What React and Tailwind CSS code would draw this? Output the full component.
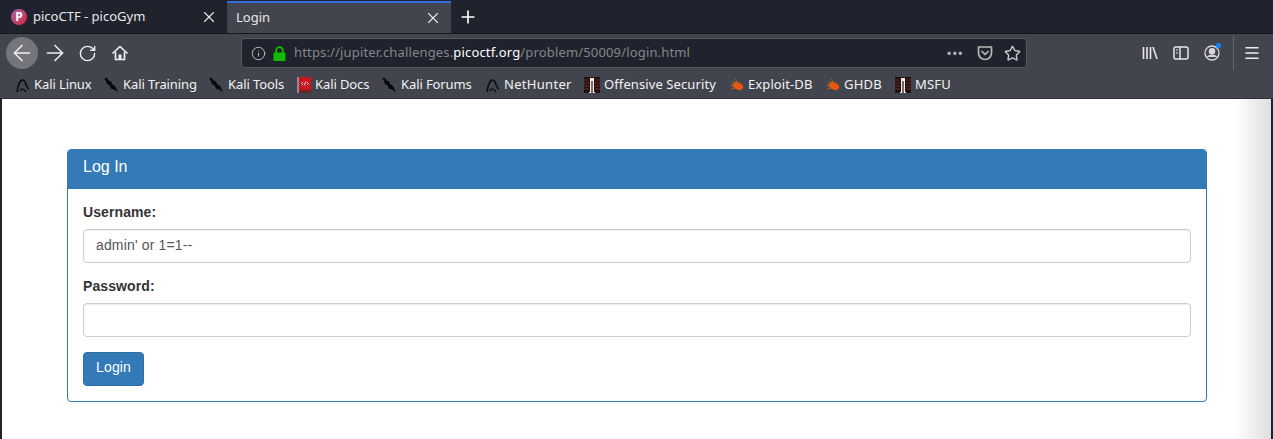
import React from 'react';
import { X, Plus, ArrowLeft, ArrowRight, RotateCw, Info, Star, Menu } from 'lucide-react';

const KaliDragon = () => (
    <svg width="16" height="16" viewBox="0 0 16 16" className="shrink-0">
        <path d="M2 15 C3 9 4 3 8 3 C11 3 10 10 14 12" fill="none" stroke="#0c0d11" strokeWidth="1.6" />
        <path d="M5 14 C6 11 8 11 11 15" fill="none" stroke="#0c0d11" strokeWidth="1.4" />
    </svg>
);

const KaliSword = () => (
    <svg width="16" height="16" viewBox="0 0 16 16" className="shrink-0">
        <path d="M1 1 L4 1 L6 4 L8 4 L9 7 L12 9 L15 15 L10 12 L8 12 L7 9 L4 7 L3 4 Z" fill="#08090b" />
    </svg>
);

const KaliBook = () => (
    <svg width="14" height="16" viewBox="0 0 14 16" className="shrink-0">
        <rect x="0" y="0" width="14" height="16" fill="#8a8d93" />
        <rect x="2" y="0" width="12" height="13" fill="#c8171e" />
        <rect x="2" y="13" width="12" height="3" fill="#6d2428" />
        <path d="M6 5 L4.5 6.5 L6 8 M10 5 L11.5 6.5 L10 8 M8.8 4.5 L7.2 8.5" fill="none" stroke="#fff" strokeWidth="0.8" />
    </svg>
);

const OffSec = () => (
    <svg width="16" height="16" viewBox="0 0 16 16" className="shrink-0">
        <rect width="16" height="16" fill="#24100f" />
        <path d="M0 3 H5 M0 6 H5 M0 9 H5 M0 12 H5 M11 3 H16 M11 6 H16 M11 9 H16 M11 12 H16" stroke="#6b2a26" strokeWidth="1" />
        <path d="M6 1 H10 V15 H11 V16 H8.6 V4 H7.4 V16 H5 V15 H6 Z" fill="#f2eeee" />
    </svg>
);

const Bug = () => (
    <svg width="16" height="16" viewBox="0 0 16 16" className="shrink-0">
        <ellipse cx="9" cy="9" rx="5.5" ry="3.6" transform="rotate(25 9 9)" fill="#e8590f" />
        <path d="M1 8 L5 9 M3 4 L7 7 M2 12 L6 11 M6 2 L9 6" stroke="#a8622f" strokeWidth="1" />
    </svg>
);

const Pocket = () => (
    <svg width="16" height="16" viewBox="0 0 16 16" fill="none" stroke="#b6b8bc" strokeWidth="1.7">
        <path d="M1.5 2 H14.5 V8 A6.5 6.5 0 0 1 1.5 8 Z" strokeLinejoin="round" />
        <path d="M5 6.5 L8 9.5 L11 6.5" strokeLinecap="round" strokeLinejoin="round" />
    </svg>
);

const GreenLock = () => (
    <svg width="13" height="15" viewBox="0 0 13 15" className="ml-[7px] shrink-0">
        <path d="M3.2 7 V4.5 A3.3 3.3 0 0 1 9.8 4.5 V7" fill="none" stroke="#12bc00" strokeWidth="1.8" />
        <rect x="0.5" y="6.5" width="12" height="8.5" rx="0.8" fill="#12bc00" />
    </svg>
);

const HomeIcon = () => (
    <svg width="16" height="16" viewBox="0 0 16 16" className="ml-[15px] shrink-0" fill="none" stroke="#eeeeee" strokeWidth="1.7" strokeLinejoin="round">
        <path d="M1 8 L8 1.5 L15 8" strokeLinecap="round" />
        <path d="M3.5 7 V14.5 H12.5 V7" />
        <rect x="6.5" y="9.5" width="3" height="5" fill="#eeeeee" stroke="none" />
    </svg>
);

const Library = () => (
    <svg width="16" height="16" viewBox="0 0 16 16" fill="none" stroke="#e6e6e8" strokeWidth="1.6">
        <path d="M1.5 2 V14 M5 2 V14 M8.5 2 V14 M11 2 L15 14" />
    </svg>
);

const Sidebar = () => (
    <svg width="16" height="16" viewBox="0 0 16 16" fill="none" stroke="#e6e6e8" strokeWidth="1.5">
        <rect x="1" y="2" width="14" height="12" rx="2" />
        <path d="M7 2 V14" />
        <path d="M3 5 H5 M3 8 H5" strokeWidth="1.2" />
    </svg>
);

const Account = () => (
    <div className="relative w-4 h-4">
        <svg width="16" height="16" viewBox="0 0 16 16" fill="none" stroke="#d8d8da" strokeWidth="1.3">
            <circle cx="8" cy="8" r="7" />
            <circle cx="8" cy="6.2" r="2.6" fill="#d8d8da" />
            <path d="M3.5 12 C5 9.6 11 9.6 12.5 12" fill="#d8d8da" />
        </svg>
        <span className="absolute -top-[2px] -right-[1px] w-[5px] h-[5px] rounded-full bg-[#0a84ff]"></span>
    </div>
);

const bookmarks = [
    { icon: <KaliDragon />, label: 'Kali Linux', box: 'w-[77px] gap-[3px]', text: 'tracking-[-0.1px]' },
    { icon: <KaliSword />, label: 'Kali Training', box: 'w-[94px] gap-[4px]', text: 'tracking-[-0.1px]' },
    { icon: <KaliSword />, label: 'Kali Tools', box: 'w-[78px] gap-[4px]', text: 'tracking-[-0.1px]' },
    { icon: <KaliBook />, label: 'Kali Docs', box: 'w-[73px] gap-[4px]', text: 'tracking-[-0.1px]' },
    { icon: <KaliSword />, label: 'Kali Forums', box: 'w-[93px] gap-[4px]', text: 'tracking-[-0.1px]' },
    { icon: <KaliDragon />, label: 'NetHunter', box: 'w-[88px] gap-[3px]', text: 'tracking-[0.3px]' },
    { icon: <OffSec />, label: 'Offensive Security', box: 'w-[134px] gap-[4px]', text: 'tracking-[0.1px]' },
    { icon: <Bug />, label: 'Exploit-DB', box: 'w-[85px] gap-[3px]', text: 'tracking-[0.1px]' },
    { icon: <Bug />, label: 'GHDB', box: 'w-[59px] gap-[3px]', text: 'tracking-[0.2px]' },
    { icon: <OffSec />, label: 'MSFU', box: 'w-[55px] gap-[4px]', text: 'tracking-[0.2px]' },
];

const Field = ({ label, value, className }) => (
    <div className={className}>
        <label className="block -mt-[2px] mb-[7px] text-[14px] leading-[20px] font-bold text-[#333] tracking-[0.1px]">{label}</label>
        <div className="h-[34px] px-3 pb-[2px] flex items-center bg-white border border-[#ccc] rounded-[4px] text-[14px] text-[#555] tracking-[0.15px] shadow-[inset_0_1px_1px_rgba(0,0,0,0.075)]">
            {value}
        </div>
    </div>
);

export default function App() {
    return (
        <div className="w-[1273px] h-[439px] overflow-hidden flex flex-col bg-[#20232d] font-['Noto_Sans',sans-serif]">
            {/* tabs */}
            <div className="h-[33px] flex items-stretch text-[13px] text-[#e8e8ea]">
                <div className="w-[227px] flex items-center pl-[11px] pr-[9px]">
                    <span className="w-[16px] h-[16px] rounded-full bg-gradient-to-br from-[#9d5aa8] to-[#d8123c] text-white text-[12px] font-bold flex items-center justify-center">P</span>
                    <span className="ml-[6px] flex-1">picoCTF - picoGym</span>
                    <X size={18} strokeWidth={1.5} />
                </div>
                <div className="w-[224px] flex items-center pl-[9px] pr-[9px] bg-[#42454d] border-t-2 border-[#2f6fe0] mt-px">
                    <span className="flex-1">Login</span>
                    <X size={18} strokeWidth={1.5} />
                </div>
                <div className="w-[34px] flex items-center justify-center">
                    <Plus size={20} strokeWidth={2} className="text-white" />
                </div>
            </div>

            {/* nav bar */}
            <div className="h-[39px] flex items-center bg-[#42454d] border-t border-[#15171d] pl-[6px] pr-[11px]">
                <div className="w-[32px] h-[32px] rounded-full bg-[#74767b] flex items-center justify-center">
                    <ArrowLeft size={26} strokeWidth={1.4} className="text-[#f2f2f2]" />
                </div>
                <ArrowRight size={26} strokeWidth={1.4} className="ml-[4px] text-[#eeeeee]" />
                <RotateCw size={19} strokeWidth={1.8} className="ml-[10px] text-[#eeeeee]" />
                <HomeIcon />
                <div className="ml-[113px] w-[786px] h-[30px] flex items-center bg-[#20232d] border border-[#55585f] rounded-[4px] pl-[9px] pr-[5px] text-[13px]">
                    <Info size={15} strokeWidth={1.5} className="text-[#c0c1c4]" />
                    <GreenLock />
                    <span className="ml-[8px] flex-1 text-[#85868b] tracking-[0.16px]">
                        https://jupiter.challenges.<span className="text-white">picoctf.org</span>/problem/50009/login.html
                    </span>
                    <span className="text-[#b6b8bc] font-bold text-[11px] tracking-[1.5px]">•••</span>
                    <span className="ml-[13px] flex"><Pocket /></span>
                    <Star size={17} strokeWidth={2} className="ml-[11px] text-[#c6c7ca]" />
                </div>
                <div className="ml-[115px] flex items-center gap-[15px]">
                    <Library />
                    <Sidebar />
                    <Account />
                </div>
                <div className="ml-[13px] w-px h-[34px] bg-[#63666c]"></div>
                <Menu size={18} strokeWidth={2} className="ml-[9px] text-[#eeeeee]" />
            </div>

            {/* bookmarks */}
            <div className="h-[27px] flex items-center gap-[11px] bg-[#42454d] border-b border-[#2e3037] pl-[15px] text-[13px] text-[#f2f2f4]">
                {bookmarks.map((b) => (
                    <div key={b.label} className={`flex items-center shrink-0 ${b.box}`}>
                        {b.icon}
                        <span className={`whitespace-nowrap ${b.text}`}>{b.label}</span>
                    </div>
                ))}
            </div>

            {/* page */}
            <div className="relative flex-1 mx-[2px] bg-white pt-[50px] pl-[65px] pr-[64px] font-['Liberation_Sans',sans-serif]">
                <div className="border border-[#337ab7] rounded-[4px] overflow-hidden">
                    <div className="h-[39px] px-[15px] pb-[6px] flex items-center bg-[#337ab7] text-white text-[16px]">Log In</div>
                    <div className="p-[15px]">
                        <Field label="Username:" value="admin' or 1=1--" className="mb-[15px]" />
                        <Field label="Password:" value="" className="mb-[15px]" />
                        <button className="w-[61px] h-[34px] pb-[4px] bg-[#337ab7] border border-[#2e6da4] rounded-[4px] text-white text-[14px] tracking-[0.1px]">Login</button>
                    </div>
                </div>
                <div className="absolute top-0 bottom-0 right-0 w-[36px] bg-gradient-to-r from-transparent to-[#dedede]"></div>
            </div>
        </div>
    );
}
